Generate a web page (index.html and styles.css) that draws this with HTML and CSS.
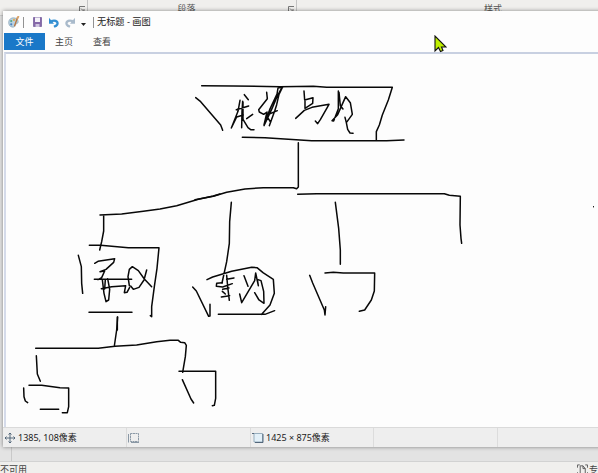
FILE: index.html
```html
<!DOCTYPE html>
<html lang="zh-CN">
<head>
<meta charset="utf-8">
<title>无标题 - 画图</title>
<link rel="stylesheet" href="styles.css">
</head>
<body>
<div class="desktop">
  <div class="ribbon">
    <div class="group group-font"><svg class="launcher" viewBox="0 0 6 6"><path d="M.5 6V.5H6M2 2.500l3 3M5 3v3H2"/></svg></div>
    <div class="group group-para"><span>段落</span><svg class="launcher" viewBox="0 0 6 6"><path d="M.5 6V.5H6M2 2.500l3 3M5 3v3H2"/></svg></div>
    <div class="group group-style"><span>样式</span></div>
  </div>
  <div class="document"><div class="ruler"></div></div>
  <div class="word-status">
    <span>不可用</span>
    <span class="focus"><svg viewBox="0 0 12 12"><path d="M3 1H.5v3M9 1h2.500v3M.5 9v2.500M11.500 9v2.500M3.500 12V2h3L9 5v7M6.500 2v3H9"/></svg>专</span>
  </div>
</div>

<div class="paint">
  <div class="titlebar">
    <svg class="app-icon" viewBox="0 0 13 13">
      <path d="M6 2C2 2 .5 5 .8 8c.3 3 3 4.500 5.500 4 1.700-.5.700-2 2-3C10 8 11 8 11 6c0-2-2-4-5-4Z" fill="#b9d2e2" stroke="#7f9caf" stroke-width=".7"/>
      <circle cx="3.500" cy="5.500" r="1.200" fill="#55a68b"/><circle cx="6.500" cy="4.200" r="1.200" fill="#e2ad54"/><circle cx="3.500" cy="9" r="1.200" fill="#4b83c0"/>
      <path d="M10.500 1 7 11" stroke="#b87843" stroke-width="1.500"/><path d="M11.500 0 10 3" stroke="#d9a268" stroke-width="2"/>
    </svg>
    <i class="sep sep-a"></i>
    <svg class="save-icon" viewBox="0 0 9 10"><path d="M.5.5h8v9h-8Z" fill="#8568a8" stroke="#8873aa"/><path d="M2 .5h5V5H2Z" fill="#f3f1f8"/><path d="M2.500 7h4v3h-4Z" fill="#cfc5df"/></svg>
    <svg class="undo-icon" viewBox="0 0 11 11"><path d="M2.500 4C8 2 11.500 6 8 9L5.500 10.200" fill="none" stroke="#338fd2" stroke-width="2.600"/><path d="M0 .2V7h5.500Z" fill="#338fd2"/></svg>
    <svg class="redo-icon" viewBox="0 0 11 11"><path d="M8.500 4C3 2-.5 6 3 9L5.500 10.200" fill="none" stroke="#a9bacb" stroke-width="2.600"/><path d="M11 .2V7H5.500Z" fill="#a9bacb"/></svg>
    <svg class="drop-icon" viewBox="0 0 5 3"><path d="M0 0h5L2.500 3Z" fill="#222"/></svg>
    <i class="sep sep-b"></i>
    <span class="title">无标题 - 画图</span>
  </div>
  <div class="tabs">
    <span class="tab file">文件</span><span class="tab">主页</span><span class="tab">查看</span>
  </div>
  <div class="canvas">
    <svg viewBox="6 54 592 373">
      <g class="ink">
        <g transform="translate(190 75) scale(.33333)">
          <path d="M35 32 130 33 270 35 370 34 410 37H607L595 75 577 120 568 150 559 170V195"/>
          <path d="M17 68 32 80 92 150 98 166"/>
          <path d="M157 187 225 188 365 197H590L642 195"/>
          <path d="M325 203V336L320 341 310 338H220L165 342 110 352 70 364 15 374"/>
        </g>
        <g transform="translate(228 82) scale(.33333)">
          <path d="M36 55 30 88 10 138 26 105 46 99M25 83 62 72M49 38 61 53M44 58 42 88 41 137M45 60V112L60 137 68 143H78M74 97 56 110"/>
          <path d="M116 31 118 50 92 83 94 90 107 97 117 90 108 129 125 83 147 36 150 18 164 15 153 37 146 68 140 87 124 131M162 16 148 42 132 80 108 131M117 99 148 86M119 106 128 121"/>
          <path d="M228 27 230 54 255 47 254 64 231 79V58M203 109 229 85 252 76 303 67 298 76 277 113 269 125 262 117"/>
          <path d="M331 27V80L317 117 312 116 329 98 353 44 367 62 373 97 355 122 351 106M333 31 337 71 345 81M355 122 359 142 366 153 375 154"/>
        </g>
        <g transform="translate(70 180) scale(.33333)">
          <path d="M450 42 430 48 385 58 320 77 270 87 220 94 155 102 90 105M101 106V153L95 185 89 210"/>
          <path d="M58 196H92L175 203H267L261 265 253 320 245 380 245 410 241 407M25 226 34 260 35 310 38 340M57 397H186M142 411V450"/>
          <path d="M74 250 84 244 134 236 131 247 108 268 90 275 104 273 95 293 84 299M73 298H185M97 299 102 340 108 365 116 360 119 328 113 296M106 299 104 327M94 326 125 320 167 317 163 338 171 337 179 322"/>
          <path d="M178 317 174 290 178 268 187 260 205 272 223 297 245 320M230 270 222 300 207 322 190 328 182 318"/>
        </g>
        <g transform="translate(190 190) scale(.33333)">
          <path d="M124 37 119 95 118 160 110 215 96 279M51 269 68 261 125 244 185 232 201 233 219 248 250 268 253 310 240 345 215 373M8 291 19 303 56 379 60 378V343M85 373H225L254 362"/>
          <path d="M110 268 132 264M97 278 80 280 79 289 98 291 127 281M110 256 113 290 118 331M98 298 117 294M94 321 119 317M97 304 106 312"/>
          <path d="M162 257 174 289M149 312 155 338 194 272 197 249 205 287 202 268 213 272 221 304 222 340 207 330 194 308"/>
          <path d="M436 37 446 115 451 180V223M405 249 430 247 460 249H554L553 303 544 330 524 360 508 364M359 256 368 279 403 360 405 375 407 350"/>
          <path d="M323 13 380 11H763L778 16 811 19 810 105 813 145 815 160"/>
        </g>
        <g transform="translate(10 310) scale(.33333)">
          <path d="M323 21 320 60 313 108M77 115H265L315 109 380 105 440 95 480 91H505L512 97 524 98 529 106 526 140 518 187"/>
          <path d="M79 137 82 192 91 214M57 226H95L150 233 176 234V290L172 308H157M41 234 42 260 46 273 53 278M91 298H146"/>
          <path d="M507 184H617V265L613 286 607 287M517 209 543 267 551 279"/>
        </g>
        <path d="M593.500 206.500v.5" class="dot"/>
      </g>
    </svg>
  </div>
  <div class="statusbar">
    <div class="cell position"><svg viewBox="0 0 10 10"><path d="M5 0v10M0 5h10M3.500 1.500 5 0l1.500 1.500M3.500 8.500 5 10l1.500-1.500M1.500 3.500 0 5l1.500 1.500M8.500 3.500 10 5 8.500 6.500"/></svg><span>1385, 108像素</span></div>
    <div class="cell selection"><svg viewBox="0 0 11 10"><path d="M2.500.5h8v8h-8Z" stroke-dasharray="2 .5"/><path d="M.5 1v8.500M3 9.500h8"/></svg></div>
    <div class="cell size"><svg viewBox="0 0 11 10"><path d="M2 .5h8.500V9H2Z" fill="#e3f0f8" stroke="#8ea6b8"/><path d="M0 .5h2M3 9.500h8V1"/></svg><span>1425 × 875像素</span></div>
    <div class="cell spare"></div>
  </div>
</div>
<svg class="cursor" viewBox="0 0 13 18"><path d="M1 1V16L4.500 12.500 6.500 16.500 9 15.500 7.500 12H12Z"/></svg>
</body>
</html>
```
FILE: styles.css
```css
body {
  margin: 0;
  width: 598px;
  height: 473px;
  overflow: hidden;
  position: relative;
  font-family: "Noto Sans", "Noto Sans CJK SC", sans-serif;
  font-size: 9px;
  color: #222;
}
svg { display: block; flex: none; }
.desktop { display: flex; flex-direction: column; height: 473px; background: #e3e3e3; }
.ribbon { display: flex; height: 16px; flex: none; background: #f0efed; border-bottom: 1px solid #cfcfcf; box-sizing: border-box; }
.group { display: flex; justify-content: center; position: relative; box-sizing: border-box; border-right: 1px solid #c4c4c4; line-height: 17px; color: #555; }
.group-font { width: 88px; }
.group-para { width: 209px; padding-right: 11px; }
.group-style { flex: 1; padding-left: 91px; }
.ribbon .group-style { border: 0; }
.launcher { position: absolute; right: 2px; top: 6px; width: 6px; height: 6px; fill: none; stroke: #777; }
.document { flex: 1; display: flex; }
.ruler { width: 11px; border-right: 1px solid #c9c9c9; }
.word-status { height: 11px; flex: none; display: flex; justify-content: space-between; background: #f0efed; border-top: 1px solid #d2d2d2; line-height: 15px; white-space: nowrap; color: #444; }
.focus { display: flex; gap: 1px; width: 21px; }
.focus svg { width: 11px; height: 11px; margin-top: 2px; fill: none; stroke: #555; }

.paint {
  position: absolute;
  left: 3px;
  top: 11px;
  width: 600px;
  height: 436px;
  display: flex;
  flex-direction: column;
  background: #fdfdfd;
  box-shadow: 0 0 4px rgba(0, 0, 0, .45);
}
.titlebar { display: flex; align-items: center; height: 22px; padding-left: 5px; flex: none; }
.app-icon { width: 12px; height: 12px; fill: none; }
.sep { width: 1px; height: 11px; background: #929292; }
.sep-a { margin-left: 3px; }
.save-icon { width: 9px; height: 10px; margin-left: 9px; }
.undo-icon { width: 10px; height: 11px; margin-left: 7px; }
.redo-icon { width: 10px; height: 11px; margin-left: 6px; }
.drop-icon { width: 5px; height: 3px; margin: 4px 0 0 6px; }
.sep-b { margin-left: 7px; }
.title { margin-left: 3px; font-size: 9.2px; line-height: 22px; white-space: nowrap; }
.tabs { display: flex; height: 17px; flex: none; padding-left: 1px; }
.tab { width: 38px; text-align: center; line-height: 18px; color: #444; }
.tab.file { width: 41px; background: #1a78c8; color: #fff; }
.canvas { flex: 1; border-top: 2px solid #c8d0e1; border-left: 2px solid #d5dbea; margin: 2px 0 0 1px; min-height: 0; }
.canvas > svg { width: 592px; height: 373px; }
.ink { fill: none; stroke: #080808; stroke-width: 4.500; stroke-linejoin: round; stroke-linecap: round; }
.dot { stroke-width: 1; }
.statusbar { display: flex; height: 20px; flex: none; box-sizing: border-box; border-top: 1px solid #dadada; background: #eee; }
.cell { display: flex; align-items: center; gap: 3px; box-sizing: border-box; border-right: 1px solid #dcdcdc; padding-left: 2px; white-space: nowrap; line-height: 18px; }
.cell svg { width: 10px; height: 10px; fill: none; stroke: #465b70; stroke-width: .9; overflow: visible; }
.position { width: 124px; }
.selection { width: 124px; padding-left: 1px; }
.selection svg { width: 11px; stroke: #7e8d9c; }
.size { width: 123px; padding-left: 1px; }
.size svg { width: 11px; }
.spare { width: 124px; }
.cursor { position: absolute; left: 434px; top: 35px; width: 13px; height: 18px; fill: #bff000; stroke: #111; stroke-width: 1.100; }
```
